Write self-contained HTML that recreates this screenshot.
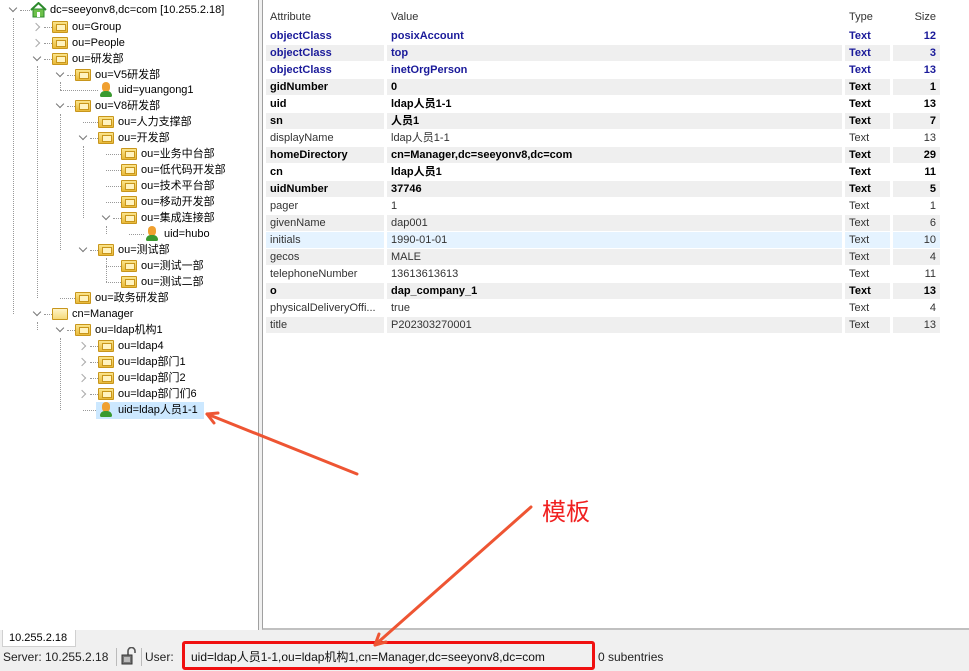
<!DOCTYPE html>
<html><head><meta charset="utf-8"><style>
*{margin:0;padding:0;box-sizing:border-box}
body{width:969px;height:671px;overflow:hidden;background:#f0f0f0;font-family:"Liberation Sans","Noto Sans CJK SC",sans-serif;font-size:11px;color:#000;position:relative}
.abs{position:absolute}
#left{left:0;top:0;width:259px;height:630px;background:#fff;border-right:1px solid #a0a0a0}
#right{left:262px;top:0;width:707px;height:630px;background:#fff;border-left:1px solid #a0a0a0;border-bottom:2px solid #c0c0c0}
.n{position:absolute;height:16px;line-height:16px;white-space:nowrap;font-size:11px;color:#000}
.chev{position:absolute;width:6px;height:6px;border-right:1.5px solid #777;border-bottom:1.5px solid #777}
.cd{transform:rotate(45deg)}
.cr{transform:rotate(-45deg);border-color:#aaa}
.fold{position:absolute;width:16px;height:12px;background:linear-gradient(#fbe48a,#e8b939);border:1px solid #c8961c;border-radius:1px}
.fold:after{content:"";position:absolute;left:3px;top:2px;width:8px;height:5px;border:1px solid #c8961c;background:#fff3c0}
.fold.pale{background:linear-gradient(#fff4c8,#f5d97a)}
.fold.pale:after{display:none}
.per{position:absolute;width:14px;height:16px}
.per:before{content:"";position:absolute;left:3px;top:0;width:8px;height:10px;border-radius:4px;background:#f0a030}
.per:after{content:"";position:absolute;left:1px;top:9px;width:12px;height:6px;border-radius:6px 6px 2px 2px;background:#3a9a30}
.hd{position:absolute;border-top:1px dotted #999;height:0}
.vd{position:absolute;border-left:1px dotted #999;width:0}
table{border-collapse:separate;border-spacing:3px 1px;position:absolute;left:263px;top:5px;font-size:11px}
td{height:16px;line-height:16px;padding:0 4px;white-space:nowrap}
tr.h td{height:21px;color:#333}
tr.g td{background:#efefef}
tr.s td{background:#e5f3ff}
tr.b td{font-weight:bold}
tr.bl td{font-weight:bold;color:#1a1a9a}
tr.nm td{color:#333}
td.sz{text-align:right}
</style></head><body>
<div id="left" class="abs">
<div class="vd" style="left:13px;top:18px;height:296px"></div>
<div class="vd" style="left:37px;top:66px;height:232px"></div>
<div class="vd" style="left:60px;top:82px;height:8px"></div>
<div class="vd" style="left:60px;top:114px;height:136px"></div>
<div class="vd" style="left:83px;top:146px;height:72px"></div>
<div class="vd" style="left:106px;top:226px;height:8px"></div>
<div class="vd" style="left:106px;top:258px;height:24px"></div>
<div class="vd" style="left:37px;top:322px;height:8px"></div>
<div class="vd" style="left:60px;top:338px;height:72px"></div>

<div class="chev cd" style="left:10px;top:5px"></div>
<div class="hd" style="left:20px;top:10px;width:10px"></div>
<svg class="abs" style="left:30px;top:2px" width="17" height="16" viewBox="0 0 17 16"><path d="M1 8 L8.5 1 L16 8" fill="none" stroke="#2c8a2c" stroke-width="2"/><rect x="3" y="7" width="11" height="8" fill="#6cc04a" stroke="#2c8a2c"/><rect x="7" y="10" width="3" height="5" fill="#fff"/></svg>
<div class="n" style="left:50px;top:2px">dc=seeyonv8,dc=com [10.255.2.18]</div>

<div class="chev cr" style="left:33px;top:24px"></div><div class="hd" style="left:44px;top:27px;width:8px"></div><div class="fold" style="left:52px;top:21px"></div><div class="n" style="left:72px;top:19px">ou=Group</div>
<div class="chev cr" style="left:33px;top:40px"></div><div class="hd" style="left:44px;top:43px;width:8px"></div><div class="fold" style="left:52px;top:37px"></div><div class="n" style="left:72px;top:35px">ou=People</div>
<div class="chev cd" style="left:34px;top:54px"></div><div class="hd" style="left:44px;top:59px;width:8px"></div><div class="fold" style="left:52px;top:53px"></div><div class="n" style="left:72px;top:51px">ou=研发部</div>
<div class="chev cd" style="left:57px;top:70px"></div><div class="hd" style="left:67px;top:75px;width:8px"></div><div class="fold" style="left:75px;top:69px"></div><div class="n" style="left:95px;top:67px">ou=V5研发部</div>
<div class="hd" style="left:60px;top:90px;width:38px"></div><div class="per" style="left:99px;top:82px"></div><div class="n" style="left:118px;top:82px">uid=yuangong1</div>
<div class="chev cd" style="left:57px;top:101px"></div><div class="hd" style="left:67px;top:106px;width:8px"></div><div class="fold" style="left:75px;top:100px"></div><div class="n" style="left:95px;top:98px">ou=V8研发部</div>
<div class="hd" style="left:83px;top:122px;width:15px"></div><div class="fold" style="left:98px;top:116px"></div><div class="n" style="left:118px;top:114px">ou=人力支撑部</div>
<div class="chev cd" style="left:80px;top:133px"></div><div class="hd" style="left:90px;top:138px;width:8px"></div><div class="fold" style="left:98px;top:132px"></div><div class="n" style="left:118px;top:130px">ou=开发部</div>
<div class="hd" style="left:106px;top:154px;width:15px"></div><div class="fold" style="left:121px;top:148px"></div><div class="n" style="left:141px;top:146px">ou=业务中台部</div>
<div class="hd" style="left:106px;top:170px;width:15px"></div><div class="fold" style="left:121px;top:164px"></div><div class="n" style="left:141px;top:162px">ou=低代码开发部</div>
<div class="hd" style="left:106px;top:186px;width:15px"></div><div class="fold" style="left:121px;top:180px"></div><div class="n" style="left:141px;top:178px">ou=技术平台部</div>
<div class="hd" style="left:106px;top:202px;width:15px"></div><div class="fold" style="left:121px;top:196px"></div><div class="n" style="left:141px;top:194px">ou=移动开发部</div>
<div class="chev cd" style="left:103px;top:213px"></div><div class="hd" style="left:113px;top:218px;width:8px"></div><div class="fold" style="left:121px;top:212px"></div><div class="n" style="left:141px;top:210px">ou=集成连接部</div>
<div class="hd" style="left:129px;top:234px;width:15px"></div><div class="per" style="left:145px;top:226px"></div><div class="n" style="left:164px;top:226px">uid=hubo</div>
<div class="chev cd" style="left:80px;top:245px"></div><div class="hd" style="left:90px;top:250px;width:8px"></div><div class="fold" style="left:98px;top:244px"></div><div class="n" style="left:118px;top:242px">ou=测试部</div>
<div class="hd" style="left:106px;top:266px;width:15px"></div><div class="fold" style="left:121px;top:260px"></div><div class="n" style="left:141px;top:258px">ou=测试一部</div>
<div class="hd" style="left:106px;top:282px;width:15px"></div><div class="fold" style="left:121px;top:276px"></div><div class="n" style="left:141px;top:274px">ou=测试二部</div>
<div class="hd" style="left:60px;top:298px;width:15px"></div><div class="fold" style="left:75px;top:292px"></div><div class="n" style="left:95px;top:290px">ou=政务研发部</div>
<div class="chev cd" style="left:34px;top:309px"></div><div class="hd" style="left:44px;top:314px;width:8px"></div><div class="fold pale" style="left:52px;top:308px"></div><div class="n" style="left:72px;top:306px">cn=Manager</div>
<div class="chev cd" style="left:57px;top:325px"></div><div class="hd" style="left:67px;top:330px;width:8px"></div><div class="fold" style="left:75px;top:324px"></div><div class="n" style="left:95px;top:322px">ou=ldap机构1</div>
<div class="chev cr" style="left:79px;top:343px"></div><div class="hd" style="left:90px;top:346px;width:8px"></div><div class="fold" style="left:98px;top:340px"></div><div class="n" style="left:118px;top:338px">ou=ldap4</div>
<div class="chev cr" style="left:79px;top:359px"></div><div class="hd" style="left:90px;top:362px;width:8px"></div><div class="fold" style="left:98px;top:356px"></div><div class="n" style="left:118px;top:354px">ou=ldap部门1</div>
<div class="chev cr" style="left:79px;top:375px"></div><div class="hd" style="left:90px;top:378px;width:8px"></div><div class="fold" style="left:98px;top:372px"></div><div class="n" style="left:118px;top:370px">ou=ldap部门2</div>
<div class="chev cr" style="left:79px;top:391px"></div><div class="hd" style="left:90px;top:394px;width:8px"></div><div class="fold" style="left:98px;top:388px"></div><div class="n" style="left:118px;top:386px">ou=ldap部门们6</div>
<div class="hd" style="left:83px;top:410px;width:13px"></div>
<div class="abs" style="left:96px;top:402px;width:108px;height:17px;background:#cce8ff"></div>
<div class="per" style="left:99px;top:402px"></div><div class="n" style="left:118px;top:402px">uid=ldap人员1-1</div>
</div>

<div id="right" class="abs"></div>
<table>
<colgroup><col style="width:118px"><col style="width:455px"><col style="width:45px"><col style="width:47px"></colgroup>
<tr class="h"><td>Attribute</td><td>Value</td><td>Type</td><td class="sz">Size</td></tr>
<tr class="bl"><td>objectClass</td><td>posixAccount</td><td>Text</td><td class="sz">12</td></tr>
<tr class="bl g"><td>objectClass</td><td>top</td><td>Text</td><td class="sz">3</td></tr>
<tr class="bl"><td>objectClass</td><td>inetOrgPerson</td><td>Text</td><td class="sz">13</td></tr>
<tr class="b g"><td>gidNumber</td><td>0</td><td>Text</td><td class="sz">1</td></tr>
<tr class="b"><td>uid</td><td>ldap人员1-1</td><td>Text</td><td class="sz">13</td></tr>
<tr class="b g"><td>sn</td><td>人员1</td><td>Text</td><td class="sz">7</td></tr>
<tr class="nm"><td>displayName</td><td>ldap人员1-1</td><td>Text</td><td class="sz">13</td></tr>
<tr class="b g"><td>homeDirectory</td><td>cn=Manager,dc=seeyonv8,dc=com</td><td>Text</td><td class="sz">29</td></tr>
<tr class="b"><td>cn</td><td>ldap人员1</td><td>Text</td><td class="sz">11</td></tr>
<tr class="b g"><td>uidNumber</td><td>37746</td><td>Text</td><td class="sz">5</td></tr>
<tr class="nm"><td>pager</td><td>1</td><td>Text</td><td class="sz">1</td></tr>
<tr class="nm g"><td>givenName</td><td>dap001</td><td>Text</td><td class="sz">6</td></tr>
<tr class="nm s"><td>initials</td><td>1990-01-01</td><td>Text</td><td class="sz">10</td></tr>
<tr class="nm g"><td>gecos</td><td>MALE</td><td>Text</td><td class="sz">4</td></tr>
<tr class="nm"><td>telephoneNumber</td><td>13613613613</td><td>Text</td><td class="sz">11</td></tr>
<tr class="b g"><td>o</td><td>dap_company_1</td><td>Text</td><td class="sz">13</td></tr>
<tr class="nm"><td>physicalDeliveryOffi...</td><td>true</td><td>Text</td><td class="sz">4</td></tr>
<tr class="nm g"><td>title</td><td>P202303270001</td><td>Text</td><td class="sz">13</td></tr>
</table>

<div class="abs" style="left:2px;top:630px;width:74px;height:17px;background:#fff;border:1px solid #d0d0d0;border-top:none;font-size:11px;line-height:16px;padding-left:6px">10.255.2.18</div>
<div class="abs" style="left:3px;top:648px;height:18px;line-height:18px;font-size:12px;color:#222">Server: 10.255.2.18</div>
<div class="abs" style="left:116px;top:648px;width:1px;height:18px;background:#bbb"></div>
<svg class="abs" style="left:121px;top:647px" width="16" height="18" viewBox="0 0 16 18"><path d="M7 8 V4 a3.5 3.5 0 0 1 7 0 V6" fill="none" stroke="#555" stroke-width="1.6"/><rect x="1" y="8" width="10" height="9" fill="#777" stroke="#333"/><rect x="3" y="10" width="6" height="5" fill="#bbb"/></svg>
<div class="abs" style="left:141px;top:648px;width:1px;height:18px;background:#bbb"></div>
<div class="abs" style="left:145px;top:648px;height:18px;line-height:18px;font-size:12px;color:#222">User:</div>
<div class="abs" style="left:182px;top:641px;width:413px;height:29px;border:3px solid #f01010;border-radius:3px"></div>
<div class="abs" style="left:191px;top:648px;height:18px;line-height:18px;font-size:12px;color:#111">uid=ldap人员1-1,ou=ldap机构1,cn=Manager,dc=seeyonv8,dc=com</div>
<div class="abs" style="left:598px;top:648px;height:18px;line-height:18px;font-size:12px;color:#222">0 subentries</div>

<div class="abs" style="left:542px;top:495px;font-size:24px;line-height:30px;color:#f02020;font-family:'Noto Sans CJK SC',sans-serif">模板</div>
<svg class="abs" style="left:0;top:0" width="969" height="671">
<g stroke="#ee5533" stroke-width="3" fill="none" stroke-linecap="round">
<path d="M357 474 L207 414"/><path d="M207 414 L218 413 M207 414 L214 423"/>
<path d="M531 507 L375 645"/><path d="M375 645 L379 634 M375 645 L386 642"/>
</g></svg>
</body></html>
